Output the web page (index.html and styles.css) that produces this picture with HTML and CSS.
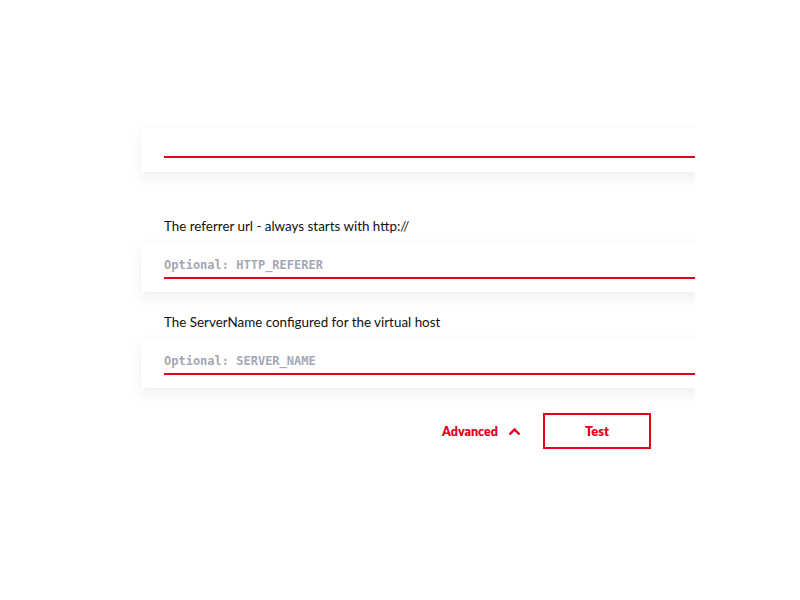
FILE: index.html
```html
<!DOCTYPE html>
<html>
<head>
<meta charset="utf-8">
<link rel="stylesheet" href="styles.css">
</head>
<body>
<div class="clip">
  <div class="form">
    <div class="card first"><div class="field"><span class="ph"></span></div></div>
    <label class="label">The referrer url - always starts with http://</label>
    <div class="card"><div class="field"><span class="ph">Optional: HTTP_REFERER</span></div></div>
    <label class="label">The ServerName configured for the virtual host</label>
    <div class="card"><div class="field"><span class="ph">Optional: SERVER_NAME</span></div></div>
    <div class="actions">
      <button class="adv">Advanced
        <svg width="13" height="9" viewBox="0 0 13 9"><path d="M1.5 7.5 L6.5 2.5 L11.5 7.5" fill="none" stroke="#e2001a" stroke-width="2.4"/></svg>
      </button>
      <button class="test">Test</button>
    </div>
  </div>
</div>
</body>
</html>
```
FILE: styles.css
```css
html, body { margin: 0; padding: 0; background: #fff; }
body { font-family: Lato, "Noto Sans", sans-serif; }
.clip {
  margin-left: 133px;
  width: 562px;
  overflow: hidden;
  padding-top: 128px;
}
.form {
  padding-left: 8px;
  padding-bottom: 40px;
}
.card {
  width: 600px;
  height: 49px;
  background: #fff;
  box-shadow: 0 6px 14px rgba(0,0,0,0.06), 0 0 3px rgba(0,0,0,0.03);
  box-sizing: border-box;
  padding: 0 0 0 23px;
}
.card.first { height: 44px; }
.card.first .field { height: 30px; }
.field {
  height: 36px;
  border-bottom: 2px solid #e2001a;
  box-sizing: border-box;
  display: flex;
  align-items: flex-start;
  padding-top: 15px;
}
.ph {
  font-family: "DejaVu Sans Mono", monospace;
  font-size: 12px;
  line-height: 14px;
  font-weight: bold;
  color: #a3a8b4;
}
.label {
  display: block;
  font-size: 13.4px;
  color: #111;
  padding-left: 23px;
  margin-top: 46px;
  margin-bottom: 9px;
  line-height: 16px;
}
.card:not(.first) + .label { margin-top: 22px; }
.actions {
  display: flex;
  justify-content: flex-end;
  align-items: center;
  gap: 22px;
  margin-top: 25px;
  padding-right: 44px;
}
.adv {
  background: none;
  border: none;
  color: #e2001a;
  font-family: Lato, sans-serif;
  font-weight: 800;
  font-size: 12.5px;
  display: flex;
  align-items: center;
  gap: 10px;
  padding: 0;
}
.test {
  width: 108px;
  height: 36px;
  background: #fff;
  border: 2px solid #e2001a;
  color: #e2001a;
  font-family: Lato, sans-serif;
  font-weight: 800;
  font-size: 13px;
}
```
